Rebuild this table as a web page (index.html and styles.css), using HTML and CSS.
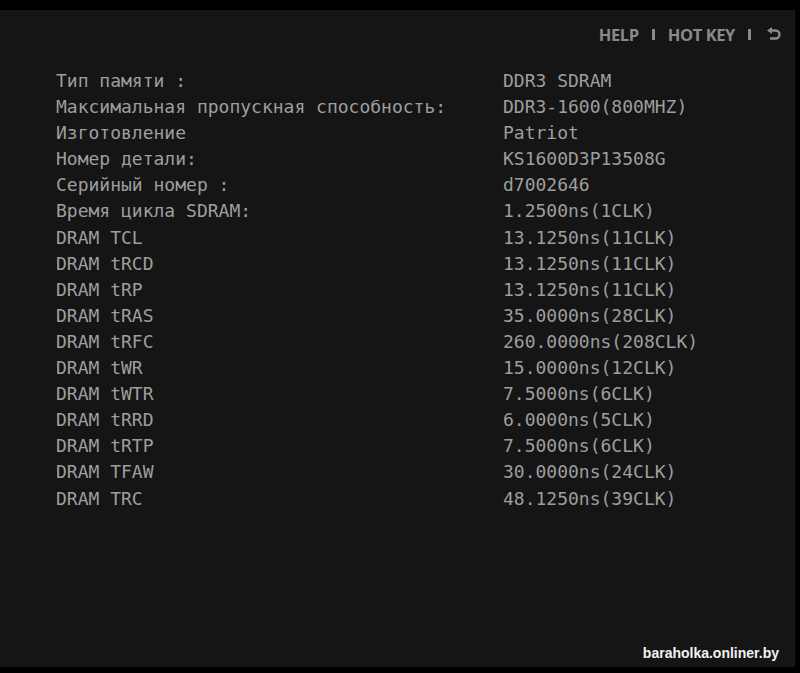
FILE: index.html
```html
<!DOCTYPE html>
<html>
<head>
<meta charset="utf-8">
<link rel="stylesheet" href="styles.css">
</head>
<body>
<div class="screen">
  <div class="panel">
    <div class="topbar">
      <span class="link">HELP</span>
      <span class="sep"></span>
      <span class="link">HOT KEY</span>
      <span class="sep"></span>
      <svg class="back" width="16" height="14" viewBox="0 0 16 14">
        <path d="M4.5 3.5 H9.5 A4 4 0 0 1 9.5 11.5 H4" fill="none" stroke="#8a8a8a" stroke-width="2.4"/>
        <path d="M1 3.5 L6 0 L6 7 Z" fill="#8a8a8a"/>
      </svg>
    </div>
    <div class="table">
      <div class="k">Тип памяти :</div><div class="v">DDR3 SDRAM</div>
      <div class="k">Максимальная пропускная способность:</div><div class="v">DDR3-1600(800MHZ)</div>
      <div class="k">Изготовление</div><div class="v">Patriot</div>
      <div class="k">Номер детали:</div><div class="v">KS1600D3P13508G</div>
      <div class="k">Серийный номер :</div><div class="v">d7002646</div>
      <div class="k">Время цикла SDRAM:</div><div class="v">1.2500ns(1CLK)</div>
      <div class="k">DRAM TCL</div><div class="v">13.1250ns(11CLK)</div>
      <div class="k">DRAM tRCD</div><div class="v">13.1250ns(11CLK)</div>
      <div class="k">DRAM tRP</div><div class="v">13.1250ns(11CLK)</div>
      <div class="k">DRAM tRAS</div><div class="v">35.0000ns(28CLK)</div>
      <div class="k">DRAM tRFC</div><div class="v">260.0000ns(208CLK)</div>
      <div class="k">DRAM tWR</div><div class="v">15.0000ns(12CLK)</div>
      <div class="k">DRAM tWTR</div><div class="v">7.5000ns(6CLK)</div>
      <div class="k">DRAM tRRD</div><div class="v">6.0000ns(5CLK)</div>
      <div class="k">DRAM tRTP</div><div class="v">7.5000ns(6CLK)</div>
      <div class="k">DRAM TFAW</div><div class="v">30.0000ns(24CLK)</div>
      <div class="k">DRAM TRC</div><div class="v">48.1250ns(39CLK)</div>
    </div>
    <div class="spacer"></div>
    <div class="footer">baraholka.onliner.by</div>
  </div>
</div>
</body>
</html>
```
FILE: styles.css
```css
html, body {
  margin: 0;
  padding: 0;
  background: #000;
}
.screen {
  width: 800px;
  height: 673px;
  padding-top: 10px;
  box-sizing: border-box;
  background: #000;
}
.panel {
  width: 795px;
  height: 657px;
  background: #151515;
  border-right: 1px solid #1d1d1d;
  box-sizing: border-box;
  display: flex;
  flex-direction: column;
}
.topbar {
  display: flex;
  justify-content: flex-end;
  align-items: center;
  height: 24px;
  margin-top: 12px;
  padding-right: 12px;
  font-family: "Open Sans", "Liberation Sans", sans-serif;
  font-weight: 700;
  font-size: 16.5px;
  color: #8a8a8a;
  letter-spacing: -0.4px;
}
.sep {
  display: block;
  width: 3px;
  height: 11px;
  margin: 1px 13px 0;
  background: #8a8a8a;
}
.back {
  margin-left: 2px;
}
.table {
  display: grid;
  grid-template-columns: 447px auto;
  margin-top: 22px;
  padding-left: 56px;
  font-family: "DejaVu Sans Mono", monospace;
  font-size: 18px;
  line-height: 26.1px;
  color: #9e9e9e;
  white-space: pre;
}
.spacer {
  flex: 1;
}
.footer {
  align-self: flex-end;
  margin-right: 15px;
  margin-bottom: 6px;
  font-family: "Liberation Sans", sans-serif;
  font-weight: 700;
  font-size: 14px;
  color: #f2f2f2;
  line-height: 16px;
}
```
